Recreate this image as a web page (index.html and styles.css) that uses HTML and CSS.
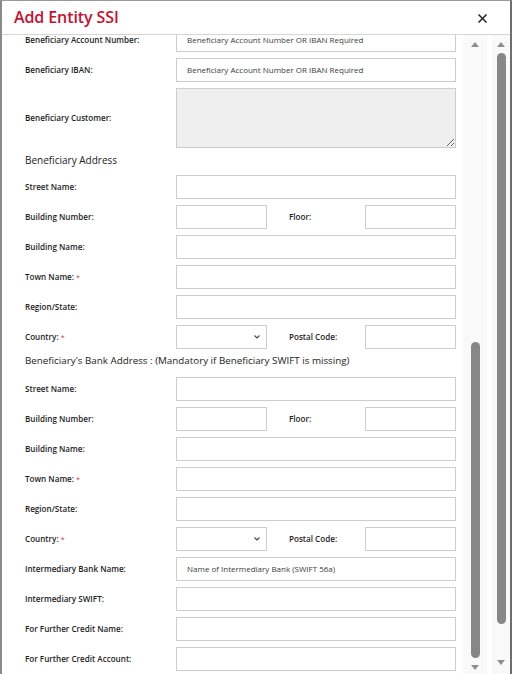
FILE: index.html
```html
<!DOCTYPE html>
<html>
<head>
<meta charset="utf-8">
<link rel="stylesheet" href="styles.css">
</head>
<body>
<div class="dialog">
  <div class="header">
    <div class="title">Add Entity SSI</div>
    <svg class="close" width="9" height="9" viewBox="0 0 9 9"><path d="M1 1L8 8M8 1L1 8" stroke="#222" stroke-width="1.5" stroke-linecap="square"/></svg>
  </div>
  <div class="body">
    <div class="content">
      <div class="form">
        <div class="row"><label>Beneficiary Account Number:</label><input class="inp" placeholder="Beneficiary Account Number OR IBAN Required"></div>
        <div class="row"><label>Beneficiary IBAN:</label><input class="inp" placeholder="Beneficiary Account Number OR IBAN Required"></div>
        <div class="row tall"><label>Beneficiary Customer:</label><textarea class="ta" readonly></textarea></div>
        <div class="section">Beneficiary Address</div>
        <div class="row"><label>Street Name:</label><input class="inp"></div>
        <div class="row split"><label>Building Number:</label><input class="inp"><label class="l2">Floor:</label><input class="inp"></div>
        <div class="row"><label>Building Name:</label><input class="inp"></div>
        <div class="row"><label>Town Name: <span class="req">*</span></label><input class="inp"></div>
        <div class="row"><label>Region/State:</label><input class="inp"></div>
        <div class="row split"><label>Country: <span class="req">*</span></label><div class="sel"><svg width="6" height="4" viewBox="0 0 6 4"><path d="M0.5 0.5L3 3L5.5 0.5" fill="none" stroke="#444" stroke-width="1.1"/></svg></div><label class="l2">Postal Code:</label><input class="inp"></div>
        <div class="section s2">Beneficiary's Bank Address : (Mandatory if Beneficiary SWIFT is missing)</div>
        <div class="row"><label>Street Name:</label><input class="inp"></div>
        <div class="row split"><label>Building Number:</label><input class="inp"><label class="l2">Floor:</label><input class="inp"></div>
        <div class="row"><label>Building Name:</label><input class="inp"></div>
        <div class="row"><label>Town Name: <span class="req">*</span></label><input class="inp"></div>
        <div class="row"><label>Region/State:</label><input class="inp"></div>
        <div class="row split"><label>Country: <span class="req">*</span></label><div class="sel"><svg width="6" height="4" viewBox="0 0 6 4"><path d="M0.5 0.5L3 3L5.5 0.5" fill="none" stroke="#444" stroke-width="1.1"/></svg></div><label class="l2">Postal Code:</label><input class="inp"></div>
        <div class="row"><label>Intermediary Bank Name:</label><input class="inp" placeholder="Name of Intermediary Bank (SWIFT 56a)"></div>
        <div class="row"><label>Intermediary SWIFT:</label><input class="inp"></div>
        <div class="row"><label>For Further Credit Name:</label><input class="inp"></div>
        <div class="row"><label>For Further Credit Account:</label><input class="inp"></div>
      </div>
    </div>
    <div class="sb inner">
      <div class="arrow up"></div>
      <div class="thumb"></div>
      <div class="arrow down"></div>
    </div>
    <div class="gapcol"></div>
    <div class="sb outer">
      <div class="arrow up"></div>
      <div class="thumb"></div>
      <div class="arrow down"></div>
    </div>
  </div>
</div>
</body>
</html>
```

FILE: styles.css
```css
html, body {
  margin: 0;
  padding: 0;
  background: #fff;
}
body {
  width: 512px;
  height: 674px;
  overflow: hidden;
  font-family: "Open Sans", "Noto Sans", sans-serif;
}
.dialog {
  box-sizing: border-box;
  width: 512px;
  height: 674px;
  border-top: 1px solid #9a9a9a;
  border-left: 2px solid #8a8a8a;
  border-right: 2px solid #6e6e6e;
  display: flex;
  flex-direction: column;
}
.header {
  height: 33px;
  border-bottom: 1px solid #d6d6d6;
  display: flex;
  align-items: center;
  justify-content: space-between;
  padding: 0 23px 0 12px;
  flex: none;
}
.title {
  color: #c8102e;
  font-weight: 600;
  font-size: 16px;
  letter-spacing: -0.1px;
  margin-top: -1px;
}
.close {
  margin-top: 1px;
}
.body {
  flex: 1;
  display: flex;
  min-height: 0;
}
.content {
  flex: none;
  width: 461px;
  overflow: hidden;
  padding-left: 23px;
  box-sizing: border-box;
}
.form {
  margin-top: -7px;
  display: flex;
  flex-direction: column;
  gap: 6px;
}
.row {
  display: grid;
  grid-template-columns: 151px 280px;
  align-items: center;
  height: 24px;
}
.row.tall {
  height: 60px;
}
.row.split {
  grid-template-columns: 151px 91px 98px 91px;
}
label {
  font-size: 8.1px;
  font-weight: 600;
  color: #1e1e1e;
  white-space: nowrap;
  padding-bottom: 2px;
}
.l2 {
  padding-left: 22px;
}
.req {
  color: #d63a50;
  font-size: 7px;
  font-weight: 400;
}
.inp, .ta, .sel {
  box-sizing: border-box;
  height: 24px;
  width: 100%;
  border: 1px solid #cdcdcd;
  background: #fff;
  margin: 0;
  font-family: "Open Sans", "Noto Sans", sans-serif;
  font-size: 8px;
  padding: 0 10px 1px;
  outline: none;
}
.inp::placeholder {
  color: #3c3c3c;
  opacity: 1;
}
.ta {
  height: 60px;
  background: #efefef;
  resize: vertical;
}
.sel {
  display: flex;
  align-items: center;
  justify-content: flex-end;
  padding-right: 6px;
}
.section {
  height: 15px;
  line-height: 12px;
  font-size: 10px;
  color: #222;
}
.section.s2 {
  height: 16px;
  line-height: 11px;
  font-size: 9.8px;
}
.sb {
  flex: none;
  display: flex;
  flex-direction: column;
  align-items: center;
  background: #f9f9f9;
}
.inner {
  width: 24px;
}
.gapcol {
  flex: none;
  width: 5px;
}
.outer {
  width: 18px;
}
.arrow {
  width: 0;
  height: 0;
  border-left: 4px solid transparent;
  border-right: 4px solid transparent;
  flex: none;
}
.arrow.up {
  border-bottom: 5px solid #8e8e8e;
  margin-top: 7px;
}
.arrow.down {
  border-top: 5px solid #8e8e8e;
}
.thumb {
  width: 9px;
  background: #878787;
  border-radius: 5px;
  flex: none;
}
.inner .thumb {
  margin-top: 295px;
  height: 316px;
}
.inner .arrow.down {
  margin-top: 7px;
}
.outer .thumb {
  margin-top: 6px;
  height: 571px;
}
.outer .arrow.down {
  margin-top: 36px;
}
```
